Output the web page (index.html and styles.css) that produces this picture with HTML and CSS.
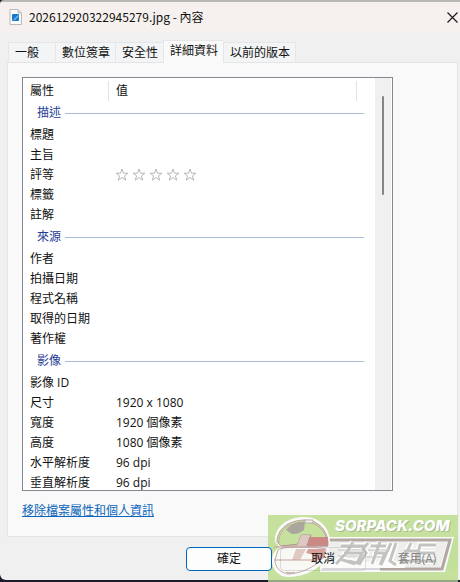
FILE: index.html
```html
<!DOCTYPE html>
<html lang="zh-Hant">

<head>
    <meta charset="UTF-8">
    <meta name="viewport" content="width=device-width, initial-scale=1.0">
    <title>202612920322945279.jpg - 內容</title>
    <link rel="stylesheet" href="styles.css">
</head>

<body>
    <div class="dialog">
        <header class="titlebar">
            <svg class="file-icon" viewBox="0 0 13 16" width="13" height="16">
                <path d="M1 .5h8l3.500 3.500v11.500h-11.500z" fill="#fafafa" stroke="#b9babd"/>
                <path d="M9 .5v3.500h3.500" fill="#ddd" stroke="#b9babd"/>
                <rect x="3" y="5" width="7" height="7" rx="1" fill="#1677cc"/>
                <path d="M4 11l5-5 1 1-4 4z" fill="#6ab9ef"/>
            </svg>
            <h1>202612920322945279.jpg - 內容</h1>
            <button type="button" class="close" aria-label="關閉">
                <svg viewBox="0 0 11 11" width="11" height="11">
                    <path d="M.5 .5l10 10M10.500 .5l-10 10" stroke="#1b1b1b" stroke-width="1.200"/>
                </svg>
            </button>
        </header>

        <nav class="tabs">
            <button type="button">一般</button>
            <button type="button">數位簽章</button>
            <button type="button">安全性</button>
            <button type="button" class="active">詳細資料</button>
            <button type="button">以前的版本</button>
        </nav>

        <main class="panel">
            <div class="list">
                <table>
                    <thead>
                        <tr>
                            <th class="name"><span>屬性</span></th>
                            <th class="value"><span>值</span></th>
                        </tr>
                    </thead>
                    <tbody>
                        <tr class="group"><th colspan="2"><div>描述</div></th></tr>
                        <tr><td>標題</td><td></td></tr>
                        <tr><td>主旨</td><td></td></tr>
                        <tr><td>評等</td><td class="stars">
                            <svg viewBox="0 0 84 16" width="84" height="16">
                                <defs>
                                    <path id="star" d="M7 2l1.500 4.200h4.500l-3.600 2.700 1.400 4.300L7 10.600l-3.800 2.600 1.400-4.300L1 6.200h4.500z" fill="#fff" stroke="#b8b8b8"/>
                                </defs>
                                <use href="#star" x="-1"/>
                                <use href="#star" x="16"/>
                                <use href="#star" x="33"/>
                                <use href="#star" x="50"/>
                                <use href="#star" x="67"/>
                            </svg>
                        </td></tr>
                        <tr><td>標籤</td><td></td></tr>
                        <tr><td>註解</td><td></td></tr>
                        <tr class="group"><th colspan="2"><div>來源</div></th></tr>
                        <tr><td>作者</td><td></td></tr>
                        <tr><td>拍攝日期</td><td></td></tr>
                        <tr><td>程式名稱</td><td></td></tr>
                        <tr><td>取得的日期</td><td></td></tr>
                        <tr><td>著作權</td><td></td></tr>
                        <tr class="group"><th colspan="2"><div>影像</div></th></tr>
                        <tr><td>影像 ID</td><td></td></tr>
                        <tr><td>尺寸</td><td>1920 x 1080</td></tr>
                        <tr><td>寬度</td><td>1920 個像素</td></tr>
                        <tr><td>高度</td><td>1080 個像素</td></tr>
                        <tr><td>水平解析度</td><td>96 dpi</td></tr>
                        <tr><td>垂直解析度</td><td>96 dpi</td></tr>
                    </tbody>
                </table>
                <div class="scrollbar"><div class="thumb"></div></div>
            </div>
            <a href="#" class="remove">移除檔案屬性和個人資訊</a>
        </main>

        <footer class="buttons">
            <button type="button" class="primary">確定</button>
            <button type="button">取消</button>
            <button type="button" class="apply">套用(A)</button>
        </footer>
    </div>

    <!-- site watermark -->
    <svg class="watermark" viewBox="0 0 190 67" width="190" height="67">
        <rect width="190" height="67" fill="#c5e19d"/>
        <path d="M0 22h190v33h-190z" fill="#bddb9b" opacity=".4"/>
        <!-- banner -->
        <path d="M54 22H186L177 57H52z" fill="#fafafa"/>
        <path d="M56 25H182L174 54H112" fill="none" stroke="#b3a7a1" stroke-width="3"/>
        <path d="M60 27H179L172 52H54z" fill="#eeefec"/>
        <path d="M54 47H137V53H52z" fill="#fbfbfa"/>
        <path d="M54 54H112" stroke="#b5b0c0"/>
        <!-- helmet -->
        <path d="M7 27C6 12 19 2 37 2 52 2 62 13 62 27L61 33C61 48 42 62 21 62 10 62 4 54 4 46 4 39 7 35 12 32z" fill="#fafafa"/>
        <path d="M9 27C9 14 21 5 37 5 50 5 59 15 60 27v4H13z" fill="#c5e19d" stroke="#b9a09d"/>
        <path d="M11 28C10 15 22 7 37 7 48 7 56 15 58 22" fill="none" stroke="#c9aaa5"/>
        <path d="M18 15C23 9 30 6 37 7L36 15C30 20 24 20 21 17z" fill="#aaa69b"/>
        <path d="M37 5h8v3h-8z" fill="#eee" stroke="#b9b0ac"/>
        <path d="M34 22h26v9H30z" fill="#cb8885"/>
        <path d="M14 31l16-2 3-9h10l-3 11h20" fill="none" stroke="#b39593"/>
        <path d="M33 20h9l-4 12h-9z" fill="#ddc7c2"/>
        <path d="M10 35C14 31 45 31 58 34 58 46 38 58 21 59 11 58 7 51 7 45z" fill="#f8f8f4" stroke="#c0aaa8"/>
        <path d="M28 34h10l-6 11h-8z" fill="#dfc9c4"/>
        <path d="M40 34h17l-1 9-11 4 1-7-8-2z" fill="#d8a09b"/>
        <path d="M6 45h40M6 32h42" stroke="#c9a19c"/>
        <path d="M18 58h9" stroke="#c7b8b4" stroke-width="2"/>
        <!-- brush lettering -->
        <g fill="none" stroke="#fff" stroke-width="6">
            <path d="M73 31h24M85 27l-6 10-11 12M76 38h18l-5 10-9-2M72 44l15 5M100 28l-5 6 3 4-7 12M103 31h15M112 27l-8 22M106 38h11l-5 12M123 28l-10 22M128 28l-6 18 6 4M136 36h14M132 46h36M143 28l-9 20M168 30h-16l-4 18M150 38h17"/>
        </g>
        <g fill="none" stroke="#c3c4c0" stroke-width="3">
            <path d="M73 31h24M85 27l-6 10-11 12M76 38h18l-5 10-9-2M72 44l15 5M100 28l-5 6 3 4-7 12M103 31h15M112 27l-8 22M106 38h11l-5 12M123 28l-10 22M128 28l-6 18 6 4M136 36h14M132 46h36M143 28l-9 20M168 30h-16l-4 18M150 38h17"/>
            <path d="M70 35h26M70 41h20M98 42h19M100 35h18" stroke-width="1"/>
        </g>
        <text class="mark-shadow" x="68" y="17">SORPACK.COM</text>
        <text class="mark-text" x="67" y="16">SORPACK.COM</text>
        <path d="M0 65h190v2H0z" fill="#94a982"/>
    </svg>
</body>

</html>
```

FILE: styles.css
```css
* {
    box-sizing: border-box;
}

body {
    margin: 0;
    height: 100vh;
    padding-bottom: 2px;
    background: #1b1b2b;
    font-family: "Open Sans", "Noto Sans CJK TC", sans-serif;
    font-size: 12px;
    line-height: 20px;
    color: #111;
    position: relative;
    overflow: hidden;
}

button {
    font: inherit;
    color: inherit;
    margin: 0;
    padding: 0;
    border: 0;
    background: none;
}

.dialog {
    height: 100%;
    display: flex;
    flex-direction: column;
    background: #f0f0f0;
    border-top: 2px solid #bab8b5;
    border-radius: 4px 0 0 6px;
}

.titlebar {
    display: flex;
    align-items: center;
    height: 30px;
    padding: 0 2px 0 9px;
    background: #f6f1ee;
    border-radius: 3px 0 0 0;
}

.titlebar h1 {
    flex: 1;
    margin: 0 0 0 7px;
    font-family: "Noto Sans CJK TC", sans-serif;
    font-size: 12px;
    font-weight: normal;
}

.close {
    display: flex;
}

/* tabs */
.tabs {
    display: flex;
    align-items: flex-end;
    height: 30px;
    padding-left: 8px;
}

.tabs button {
    height: 20px;
    min-width: 47px;
    padding: 0 5px 0 6px;
    text-align: left;
    white-space: nowrap;
    background: #f3f4f5;
    border: 1px solid #e4e6e8;
    border-width: 1px 0 0 1px;
}

.tabs button:last-child {
    border-right-width: 1px;
}

.tabs .active {
    height: 23px;
    margin-bottom: -1px;
    padding-bottom: 2px;
    background: #f9f9f9;
    position: relative;
    z-index: 1;
}

.panel {
    flex: 1;
    min-height: 0;
    display: flex;
    flex-direction: column;
    align-items: flex-start;
    margin: 0 2px 0 7px;
    padding: 14px 14px 15px;
    background: #f9f9f9;
    border: 1px solid #e5e5e5;
}

/* property list */
.list {
    flex: 1;
    min-height: 0;
    align-self: stretch;
    margin-right: 50px;
    display: flex;
    overflow: hidden;
    background: #fff;
    border: 1px solid #828790;
}

table {
    flex: 1;
    align-self: flex-start;
    margin-right: 11px;
    border-collapse: collapse;
    table-layout: fixed;
}

th,
td {
    height: 20px;
    padding: 0 0 0 7px;
    font-weight: normal;
    text-align: left;
    white-space: nowrap;
}

thead th {
    height: 23px;
    padding: 3px 0 0;
}

thead span {
    display: block;
    padding-left: 7px;
    border-right: 1px solid #e2e2e2;
}

.name {
    width: 86px;
}

thead .value {
    padding-right: 7px;
}

.group th {
    height: 24px;
    padding: 0 0 0 14px;
    color: #1f4096;
}

.group div {
    display: flex;
    align-items: center;
    gap: 4px;
}

.group div::after {
    content: "";
    flex: 1;
    height: 1px;
    background: #a9bcd6;
}

.stars svg {
    display: block;
}

.scrollbar {
    width: 17px;
    padding: 18px 8px 0 7px;
    background: #f0f0f0;
    border-right: 1px solid #fff;
}

.thumb {
    width: 2px;
    height: 25%;
    border-radius: 1px;
    background: #858585;
}

.remove {
    margin-top: 10px;
    color: #0b66bd;
}

/* bottom buttons */
.buttons {
    display: flex;
    justify-content: flex-end;
    gap: 8px;
    padding: 10px 0 9px;
    position: relative;
    z-index: 2;
}

.buttons button {
    width: 86px;
    height: 24px;
    border: 1px solid rgba(150, 150, 150, 0.3);
    border-radius: 4px;
}

.buttons .primary {
    background: #fdfdfd;
    border-color: #0067c0;
}

.buttons .apply {
    border-color: transparent;
    color: #858585;
}

.watermark {
    position: absolute;
    right: 2px;
    bottom: 0;
    z-index: 1;
}

.mark-text,
.mark-shadow {
    font-family: Inter, "Liberation Sans", sans-serif;
    font-size: 15px;
    font-weight: 800;
    font-style: italic;
    fill: #fff;
}

.mark-shadow {
    fill: #a9b994;
}
```
